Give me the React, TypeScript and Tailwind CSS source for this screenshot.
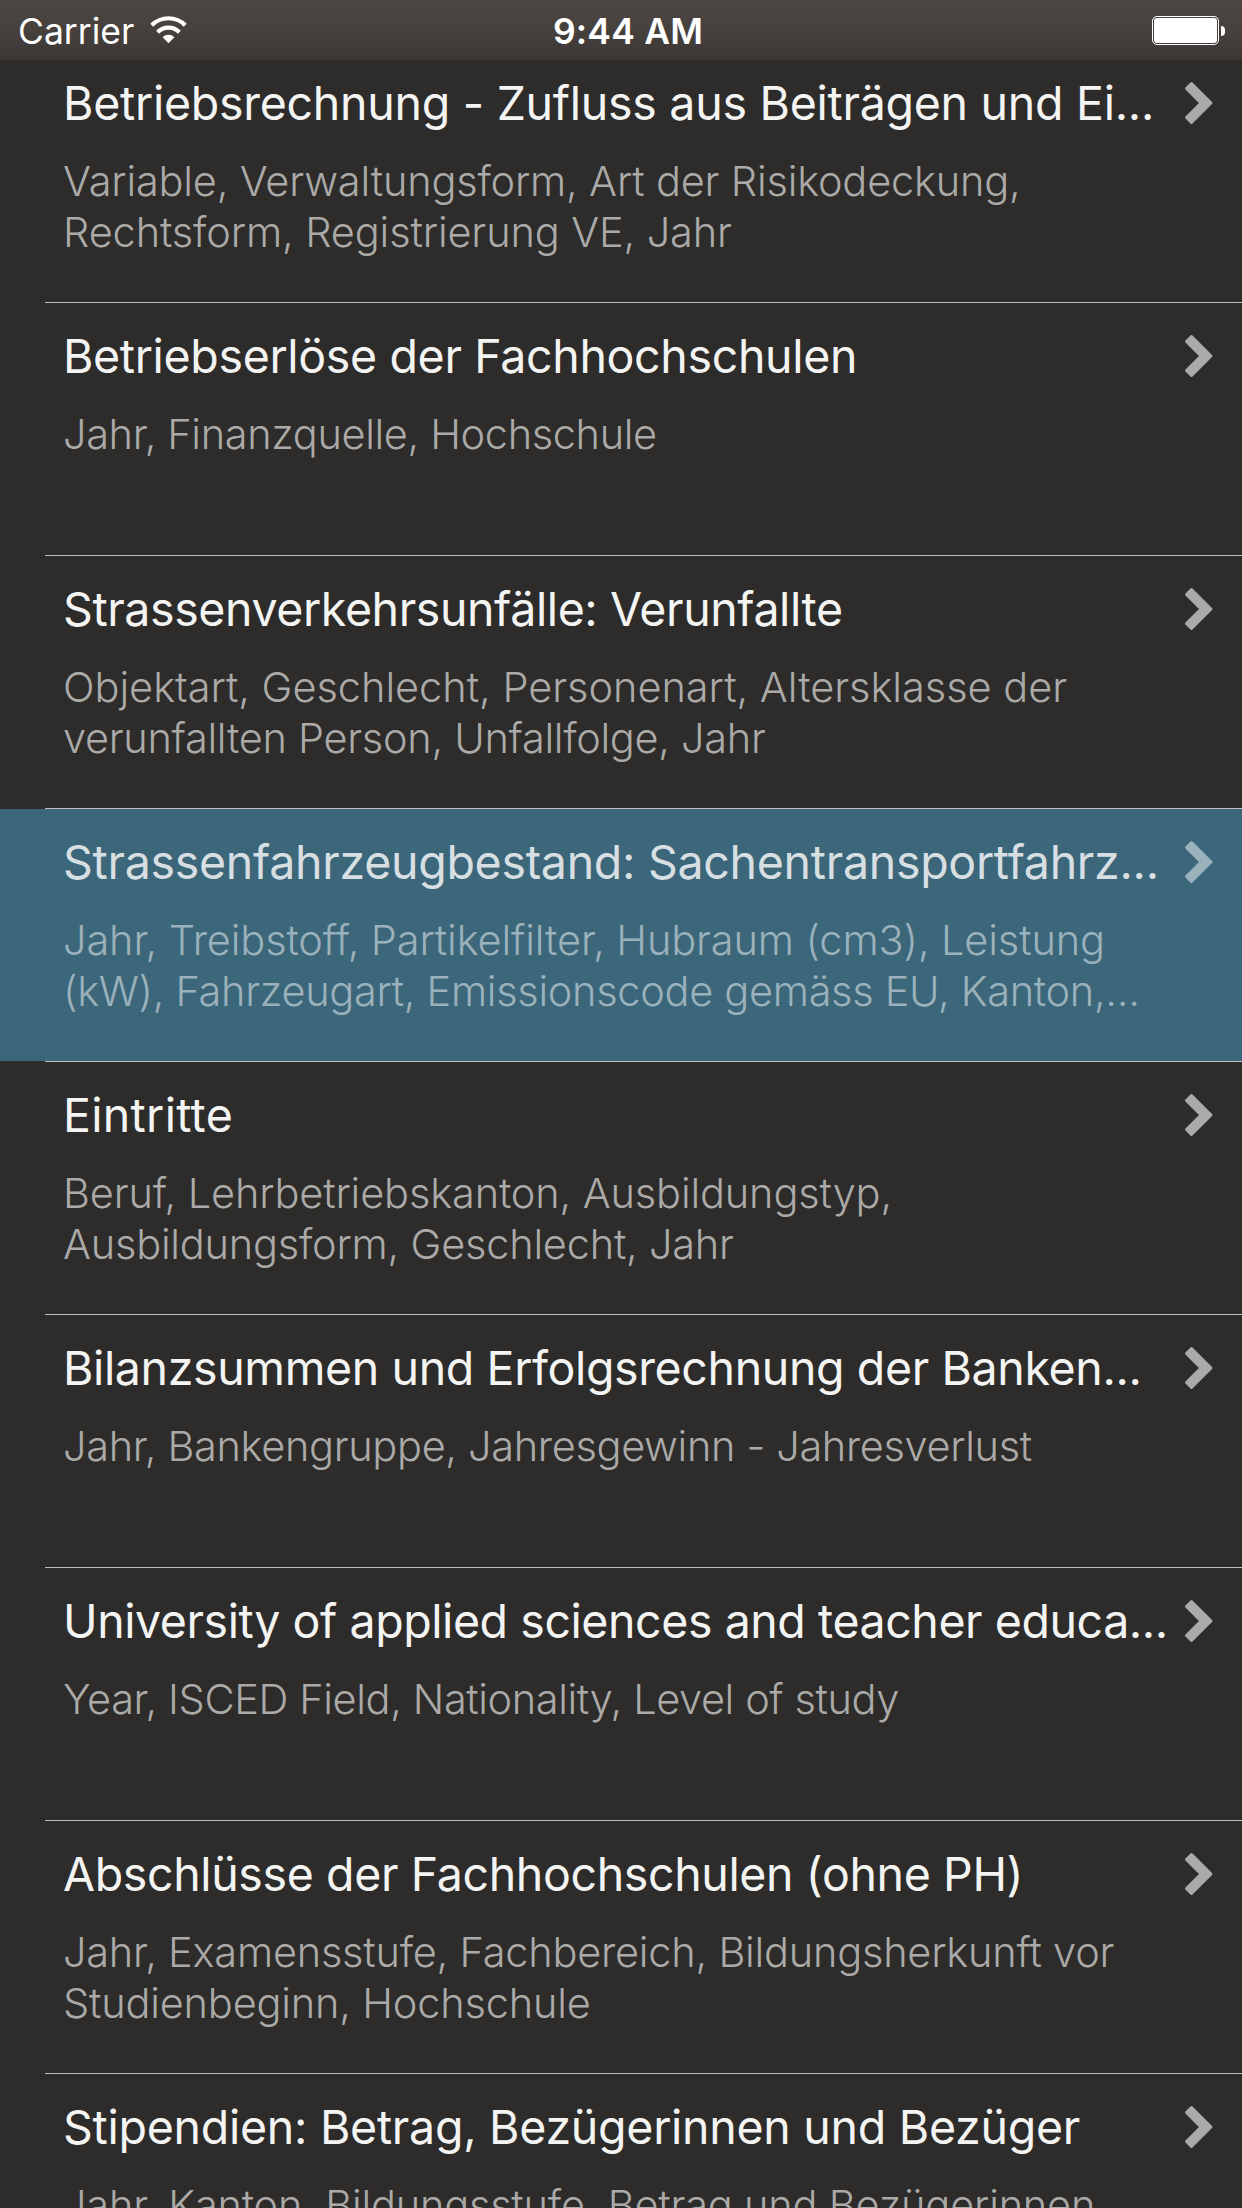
type Line = { text: string; tracking: string };
type Item = { title: Line; details: Line[]; selected?: boolean };

const items: Item[] = [
  {
    title: { text: "Betriebsrechnung - Zufluss aus Beiträgen und Ei...", tracking: "tracking-[-0.27px]" },
    details: [
      { text: "Variable, Verwaltungsform, Art der Risikodeckung,", tracking: "tracking-[-0.19px]" },
      { text: "Rechtsform, Registrierung VE, Jahr", tracking: "tracking-[-0.13px]" },
    ],
  },
  {
    title: { text: "Betriebserlöse der Fachhochschulen", tracking: "tracking-[-0.34px]" },
    details: [{ text: "Jahr, Finanzquelle, Hochschule", tracking: "tracking-[-0.36px]" }],
  },
  {
    title: { text: "Strassenverkehrsunfälle: Verunfallte", tracking: "tracking-[-0.4px]" },
    details: [
      { text: "Objektart, Geschlecht, Personenart, Altersklasse der", tracking: "tracking-[-0.03px]" },
      { text: "verunfallten Person, Unfallfolge, Jahr", tracking: "tracking-[-0.3px]" },
    ],
  },
  {
    selected: true,
    title: { text: "Strassenfahrzeugbestand: Sachentransportfahrz...", tracking: "tracking-[-0.29px]" },
    details: [
      { text: "Jahr, Treibstoff, Partikelfilter, Hubraum (cm3), Leistung", tracking: "tracking-[-0.12px]" },
      { text: "(kW), Fahrzeugart, Emissionscode gemäss EU, Kanton,...", tracking: "tracking-[-0.31px]" },
    ],
  },
  {
    title: { text: "Eintritte", tracking: "tracking-[0.3px]" },
    details: [
      { text: "Beruf, Lehrbetriebskanton, Ausbildungstyp,", tracking: "tracking-[-0.14px]" },
      { text: "Ausbildungsform, Geschlecht, Jahr", tracking: "tracking-[-0.22px]" },
    ],
  },
  {
    title: { text: "Bilanzsummen und Erfolgsrechnung der Banken...", tracking: "tracking-[-0.37px]" },
    details: [{ text: "Jahr, Bankengruppe, Jahresgewinn - Jahresverlust", tracking: "tracking-[-0.34px]" }],
  },
  {
    title: { text: "University of applied sciences and teacher educa...", tracking: "tracking-[-0.43px]" },
    details: [{ text: "Year, ISCED Field, Nationality, Level of study", tracking: "tracking-[-0.39px]" }],
  },
  {
    title: { text: "Abschlüsse der Fachhochschulen (ohne PH)", tracking: "tracking-[-0.37px]" },
    details: [
      { text: "Jahr, Examensstufe, Fachbereich, Bildungsherkunft vor", tracking: "tracking-[-0.23px]" },
      { text: "Studienbeginn, Hochschule", tracking: "tracking-[-0.19px]" },
    ],
  },
  {
    title: { text: "Stipendien: Betrag, Bezügerinnen und Bezüger", tracking: "tracking-[-0.27px]" },
    details: [{ text: "Jahr, Kanton, Bildungsstufe, Betrag und Bezügerinnen", tracking: "tracking-[-0.2px]" }],
  },
];

function Chevron({ selected }: { selected?: boolean }) {
  return (
    <svg
      className={`mt-[31px] mr-[28px] h-[44px] w-[30px] shrink-0 ${selected ? "text-[#9bb1bb]" : "text-[#abaaa8]"}`}
      viewBox="0 0 30 44"
    >
      <path
        d="M7.5 2.5 27 22 7.5 41.5 2.5 36.5 17 22 2.5 7.5Z"
        fill="currentColor"
        stroke="currentColor"
        strokeWidth="3"
        strokeLinejoin="round"
      />
    </svg>
  );
}

function Row({ item }: { item: Item }) {
  return (
    <li className={`flex h-[253px] shrink-0 flex-col ${item.selected ? "bg-[#3c677a]" : ""}`}>
      <div className="flex h-[252px] items-start justify-between pl-[63px]">
        <div className="whitespace-nowrap pt-[23px]">
          <h2
            className={`text-[46.5px] leading-[60px] font-normal ${item.title.tracking} ${
              item.selected ? "text-[#d8dfe2]" : "text-[#f4f4f3]"
            }`}
          >
            {item.title.text}
          </h2>
          <div className={`mt-[23px] text-[41.5px] leading-[51px] font-light ${item.selected ? "text-[#9bb1bb]" : "text-[#abaaa8]"}`}>
            {item.details.map((line) => (
              <p key={line.text} className={line.tracking}>
                {line.text}
              </p>
            ))}
          </div>
        </div>
        <Chevron selected={item.selected} />
      </div>
      <div className="flex h-px bg-[#2d2c2a]">
        <div className="ml-[45px] grow bg-[#bfbdb9]" />
      </div>
    </li>
  );
}

function StatusBar() {
  return (
    <header className="z-10 grid h-[60px] shrink-0 grid-cols-3 items-center bg-linear-to-b from-[#4b4642] via-[#47413e] to-[#3b3634] text-[35.5px] leading-[60px] text-white">
      <div className="flex items-center pl-[18px]">
        <span className="w-[132px] pt-[3px] leading-[57px]">Carrier</span>
        <svg className="h-[28px] w-[37px]" viewBox="0 0 37 28" fill="none" stroke="white">
          <path d="M1.8 9.2a23.5 23.5 0 0 1 33.4 0" strokeWidth="4.2" />
          <path d="M7.6 16.2a15.2 15.2 0 0 1 21.8 0" strokeWidth="4.2" />
          <path d="M12.6 21.2a8.3 8.3 0 0 1 11.8 0L18.5 27.3Z" fill="white" stroke="none" />
        </svg>
      </div>
      <span className="pt-[3px] pl-[14px] text-center leading-[57px] font-semibold tracking-[0.2px]">9:44 AM</span>
      <div className="flex items-center justify-end gap-[2px] pt-px pr-[17px]">
        <div className="h-[29px] w-[67px] rounded-[5px] border border-white p-px">
          <div className="h-full rounded-[3px] bg-white" />
        </div>
        <div className="h-[10px] w-[4px] rounded-r-full bg-white" />
      </div>
    </header>
  );
}

export default function App() {
  return (
    <div className="flex h-[2208px] w-[1242px] flex-col overflow-hidden bg-[#2d2c2a] font-['Inter',sans-serif]">
      <StatusBar />
      <ul className="-mt-[10px] flex flex-col">
        {items.map((item) => (
          <Row key={item.title.text} item={item} />
        ))}
      </ul>
    </div>
  );
}
